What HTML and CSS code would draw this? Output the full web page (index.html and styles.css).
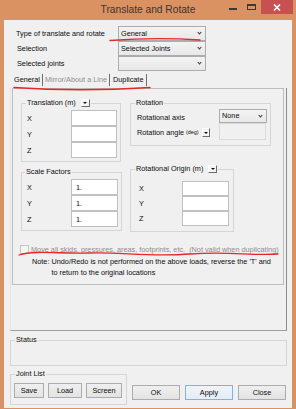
FILE: index.html
```html
<!DOCTYPE html>
<html lang="en">
<head>
<meta charset="UTF-8">
<title>Translate and Rotate</title>
<link rel="stylesheet" href="styles.css">
</head>
<body>
<div class="window">
  <div class="titlebar">
    <span class="title">Translate and Rotate</span>
    <div class="controls">
      <span class="min"></span>
      <span class="max"></span>
      <span class="close">
        <svg width="8" height="7" viewBox="0 0 8 7"><path d="M1 0.5 L7 6.5 M7 0.5 L1 6.5" stroke="#fff" stroke-width="1.6"/></svg>
      </span>
    </div>
  </div>

  <div class="client">
    <div class="form-row">
      <label>Type of translate and rotate</label>
      <div class="combo">General<i class="chev"></i></div>
    </div>
    <div class="form-row">
      <label class="lbl-b">Selection</label>
      <div class="combo">Selected Joints<i class="chev"></i></div>
    </div>
    <div class="form-row">
      <label class="lbl-b">Selected joints</label>
      <div class="combo"><i class="chev"></i></div>
    </div>

    <div class="tabs">
      <span class="tab">General</span>
      <span class="tab disabled">Mirror/About a Line</span>
      <span class="tab last">Duplicate</span>
    </div>

    <div class="frame">
      <div class="panel">
        <div class="groups">
          <div class="col">
            <fieldset class="group translation">
              <legend>Translation (m)<span class="drop"></span></legend>
              <div class="xyz">
                <span>X</span><input type="text">
                <span>Y</span><input type="text">
                <span>Z</span><input type="text">
              </div>
            </fieldset>
            <fieldset class="group scale">
              <legend>Scale Factors</legend>
              <div class="xyz">
                <span>X</span><input type="text" value="1.">
                <span>Y</span><input type="text" value="1.">
                <span>Z</span><input type="text" value="1.">
              </div>
            </fieldset>
          </div>
          <div class="col">
            <fieldset class="group rotation">
              <legend>Rotation</legend>
              <div class="rot-grid">
                <span>Rotational axis</span>
                <div class="combo small">None<i class="chev"></i></div>
                <span>Rotation angle <small>(deg)</small><span class="drop"></span></span>
                <div class="dis-box"></div>
              </div>
            </fieldset>
            <fieldset class="group origin">
              <legend>Rotational Origin (m)<span class="drop"></span></legend>
              <div class="xyz">
                <span>X</span><input type="text">
                <span>Y</span><input type="text">
                <span>Z</span><input type="text">
              </div>
            </fieldset>
          </div>
        </div>

        <div class="check-row">
          <span class="checkbox"></span>
          <span>Move all skids, pressures, areas, footprints, etc.&nbsp; (Not valid when duplicating)</span>
        </div>
        <div class="note">
          <span>Note:</span>
          <span>Undo/Redo is not performed on the above loads, reverse the 'T' and<br>to return to the original locations</span>
        </div>
      </div>
    </div>

    <fieldset class="group status">
      <legend>Status</legend>
    </fieldset>

    <div class="bottom">
      <fieldset class="group joints">
        <legend>Joint List</legend>
        <div class="btn-row">
          <button class="btn save">Save</button>
          <button class="btn load">Load</button>
          <button class="btn screen">Screen</button>
        </div>
      </fieldset>
      <div class="dialog-buttons">
        <button class="btn wide">OK</button>
        <button class="btn wide default">Apply</button>
        <button class="btn wide">Close</button>
      </div>
    </div>
  </div>

  <svg class="marks" width="296" height="409" viewBox="0 0 296 409">
    <path d="M110 40.5 Q155 37 200 40" />
    <path d="M14 87.5 Q80 92 150 87.5" />
    <path d="M19 255 C35 250 60 254 90 253 S150 257 190 254 S250 256 278 254" />
  </svg>
</div>
</body>
</html>
```

FILE: styles.css
```css
* {
  box-sizing: border-box;
}

body {
  margin: 0;
  background-color: #da9263;
  font-family: "Liberation Sans", Arial, sans-serif;
  font-size: 7.3px;
  color: #0c0c0c;
}

.window {
  position: relative;
  width: 296px;
  height: 409px;
  display: flex;
  flex-direction: column;
}

/* title bar */
.titlebar {
  height: 20px;
  display: grid;
  grid-template-columns: 1fr auto 1fr;
}
.title {
  grid-column: 2;
  font-size: 10.2px;
  line-height: 20px;
  color: #3b3430;
}
.controls {
  grid-column: 3;
  justify-self: end;
  display: flex;
  align-items: flex-start;
  margin-right: 3px;
}
.min {
  width: 8px;
  height: 2px;
  margin-top: 8px;
  margin-right: 10px;
  background-color: #3a3a3a;
}
.max {
  width: 9px;
  height: 6px;
  margin-top: 4px;
  margin-right: 5px;
  border: 1px solid #3a3a3a;
  border-top-width: 2px;
}
.close {
  width: 32px;
  height: 14px;
  background-color: #c75050;
  display: flex;
  align-items: center;
  justify-content: center;
}

/* client */
.client {
  flex: 1;
  margin: 0 4px 3px;
  padding: 6px 5px 3px 6px;
  background-color: #f0f0f0;
}

.form-row {
  display: grid;
  grid-template-columns: 102px 88px;
  align-items: center;
  height: 15px;
  padding-left: 6px;
}
.lbl-b {
  padding-left: 1px;
}

.combo {
  position: relative;
  height: 15px;
  line-height: 13px;
  padding-left: 2px;
  border: 1px solid #acacac;
  background: linear-gradient(#f3f3f3, #e8e8e8);
}
.combo.small {
  height: 14px;
  line-height: 12px;
}
.chev {
  position: absolute;
  right: 4px;
  top: 50%;
  width: 3px;
  height: 3px;
  margin-top: -2.5px;
  border-right: 1px solid #333;
  border-bottom: 1px solid #333;
  transform: rotate(45deg);
}

/* tabs */
.tabs {
  display: flex;
  height: 12px;
  line-height: 12px;
  margin-top: 3px;
  padding-left: 3px;
}
.tab {
  padding: 0 2px 0 1px;
  border-right: 1px solid #6f6f6f;
}
.tab + .tab {
  padding-left: 2px;
}
.tab.last {
  padding-left: 3px;
  padding-right: 3px;
}
.tab.disabled {
  color: #8e8e8e;
}

.frame {
  height: 243px;
  border-left: 1px solid #e4e4e4;
  border-right: 1px solid #8c8c8c;
  border-bottom: 1px solid #a0a0a0;
}
.panel {
  width: 272px;
  height: 197px;
  margin: 2px 0 0 1px;
  padding: 9px 0 0 8px;
  border: 1px solid #bdbdbd;
}

/* group boxes */
fieldset.group {
  margin: 0;
  min-width: 0;
  border: 1px solid #d5d5d5;
}
fieldset.group legend {
  padding: 0 1px;
  line-height: 10px;
  display: flex;
  align-items: center;
}

.groups {
  display: flex;
  gap: 8px;
}
.col {
  display: flex;
  flex-direction: column;
}

.translation {
  width: 100px;
  padding: 2px 3px 3px 5px;
}
.translation legend {
  margin-left: -1px;
}
.scale {
  width: 101px;
  margin-top: 5px !important;
  padding: 2px 3px 3px 5px;
}
.scale legend {
  margin-left: -2px;
}
.rotation {
  width: 141px;
  padding: 1px 3px 5px 6px;
}
.rotation legend {
  margin-left: -2px;
}
.origin {
  width: 104px;
  margin-top: 18px !important;
  padding: 7px 4px 5px 8px;
}
.origin legend {
  margin-left: -4px;
}

.drop {
  display: inline-flex;
  align-items: center;
  justify-content: center;
  width: 9px;
  height: 8px;
  margin-left: 5px;
  background-color: #f4f4f4;
  border: 1px solid;
  border-color: #fff #6a6a6a #6a6a6a #fff;
}
.drop::after {
  content: "";
  border-left: 2px solid transparent;
  border-right: 2px solid transparent;
  border-top: 2px solid #111;
}

.xyz {
  display: grid;
  grid-template-columns: 44px 46px;
  grid-auto-rows: 16px;
  align-items: center;
}
.scale .xyz {
  grid-template-columns: 44px 47px;
}
.origin .xyz {
  grid-template-columns: 43px 47px;
  grid-auto-rows: 15px;
}
.xyz input {
  width: 100%;
  height: 100%;
  margin: 0;
  padding: 0 0 0 4px;
  border: 1px solid #c0c0c0;
  background-color: #fff;
  font-family: inherit;
  font-size: 7.3px;
  color: #0c0c0c;
  outline: none;
}

.rot-grid {
  display: grid;
  grid-template-columns: 82px 48px;
  grid-template-rows: 14px 17px;
  align-items: center;
}
.rot-grid > span {
  display: flex;
  align-items: center;
  padding-top: 2px;
}
.rot-grid small {
  font-size: 5.4px;
  margin-left: 2px;
  position: relative;
  top: -1px;
}
.rot-grid .drop {
  margin-left: 3px;
  width: 8px;
  height: 9px;
}
.dis-box {
  width: 47px;
  height: 17px;
  border: 1px solid #dadada;
  background-color: #f0f0f0;
}

.check-row {
  display: flex;
  align-items: center;
  height: 10px;
  margin-top: 12px;
  margin-left: -1px;
  color: #8e8e8e;
}
.checkbox {
  width: 9px;
  height: 9px;
  margin-right: 2px;
  border: 1px solid #c6c6c6;
  background-color: #f4f4f4;
}
.note {
  display: flex;
  gap: 0.28em;
  margin-top: 2px;
  padding-left: 11px;
  line-height: 11px;
}

.status {
  height: 31px;
  margin-top: 4px !important;
  padding: 0 4px;
}

.bottom {
  display: flex;
  align-items: flex-end;
  margin-top: 3px;
}
.joints {
  width: 117px;
  padding: 4px 4px 6px 3px;
}
.joints legend {
  margin-left: 1px;
}
.btn-row {
  display: flex;
  gap: 4px;
}
.btn {
  height: 15px;
  padding: 0;
  border: 1px solid #acacac;
  background: linear-gradient(#efefef, #e3e3e3);
  font-family: inherit;
  font-size: 7.3px;
  color: #0c0c0c;
}
.save { width: 30px; }
.load { width: 34px; }
.screen { width: 36px; }

.dialog-buttons {
  display: flex;
  gap: 5px;
  margin: 0 0 5px 5px;
}
.btn.wide {
  width: 48px;
}
.btn.default {
  border-color: #7fb2e5;
  background: linear-gradient(#eef4fa, #e4ecf4);
}

/* hand-drawn pen marks on the screenshot */
.marks {
  position: absolute;
  left: 0;
  top: 0;
  pointer-events: none;
}
.marks path {
  fill: none;
  stroke: #e5262b;
  stroke-width: 1.3;
  stroke-linecap: round;
}
```
